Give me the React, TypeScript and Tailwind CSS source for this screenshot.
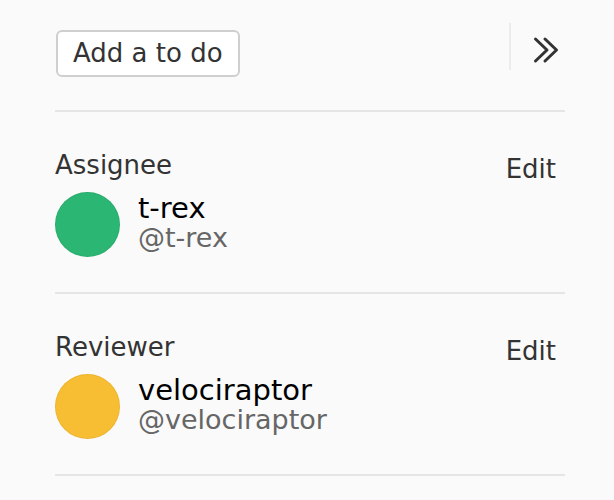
type Person = { name: string; handle: string; color: string };

function PersonBlock({ label, person }: { label: string; person: Person }) {
  return (
    <div className="border-b-2 border-[#e5e5e5] pt-[38px] pb-[35px]">
      <div className="flex items-start justify-between">
        <div className="text-[26px] leading-[30px] text-[#333]">{label}</div>
        <button className="mt-[4px] mr-[9px] text-[26px] leading-[30px] text-[#333]">Edit</button>
      </div>
      <div className="mt-[8px] flex items-center gap-[18px]">
        <div
          className={`h-[65px] w-[65px] rounded-full border border-black/5 ${person.color}`}
        />
        <div className="-mt-[3px] flex flex-col">
          <span className="text-[29px] leading-[30px] text-black">{person.name}</span>
          <span className="text-[27px] leading-[30px] text-[#666]">{person.handle}</span>
        </div>
      </div>
    </div>
  );
}

export default function App() {
  return (
    <div
      className="min-h-[500px] bg-[#fafafa] pl-[55px]"
      style={{ fontFamily: "'DejaVu Sans', sans-serif" }}
    >
      <div className="w-[510px]">
        <div className="flex h-[112px] items-center justify-between border-b-2 border-[#e5e5e5] pb-[4px]">
          <button className="ml-[1px] h-[47px] rounded-[6px] border-2 border-[#cfcfcf] bg-white px-[15px] text-[26px] leading-[30px] text-[#333]">
            Add a to do
          </button>
          <div className="flex items-center">
            <div className="mb-[13px] h-[47px] w-[2px] bg-[#ececec]" />
            <svg
              viewBox="0 0 28 28"
              className="mb-[6px] ml-[21px] mr-[5px] h-[28px] w-[28px] text-[#333]"
              fill="none"
              stroke="currentColor"
              strokeWidth={3}
              strokeLinecap="round"
              strokeLinejoin="round"
            >
              <path d="M3.5 3 L15 14 L3.5 25" />
              <path d="M13 3 L24.5 14 L13 25" />
            </svg>
          </div>
        </div>
        <PersonBlock
          label="Assignee"
          person={{ name: "t-rex", handle: "@t-rex", color: "bg-[#2bb673]" }}
        />
        <PersonBlock
          label="Reviewer"
          person={{ name: "velociraptor", handle: "@velociraptor", color: "bg-[#f8be33]" }}
        />
      </div>
    </div>
  );
}
